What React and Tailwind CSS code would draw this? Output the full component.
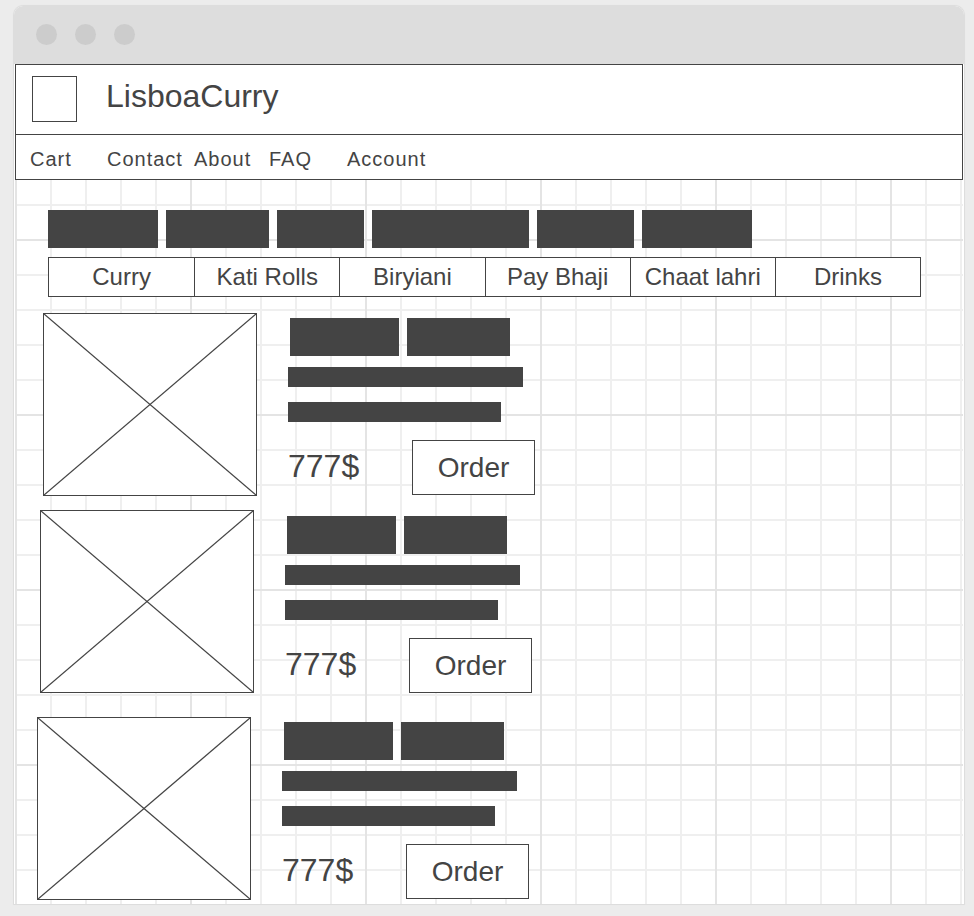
import React from 'react';

const topBars = ['w-[110px]', 'w-[103px]', 'w-[87px]', 'w-[157px]', 'w-[97px]', 'w-[110px]'];
const tabs = ['Curry', 'Kati Rolls', 'Biryiani', 'Pay Bhaji', 'Chaat lahri', 'Drinks'];

const navItems = [
    { label: 'Cart', w: 'w-[77px]' },
    { label: 'Contact', w: 'w-[87px]' },
    { label: 'About', w: 'w-[75px]' },
    { label: 'FAQ', w: 'w-[78px]' },
    { label: 'Account', w: '' },
];

// slight drift per card, like the hand-placed mockup
const cards = [
    { ml: 'ml-[28px]', mt: 'mt-[16px]', pt: 'pt-[5px]' },
    { ml: 'ml-[25px]', mt: 'mt-[14px]', pt: 'pt-[6px]' },
    { ml: 'ml-[22px]', mt: 'mt-[24px]', pt: 'pt-[5px]' },
];

const Placeholder = () => (
    <div className="w-[214px] h-[183px] border border-[#444] bg-white shrink-0">
        <svg className="block w-full h-full" viewBox="0 0 100 100" preserveAspectRatio="none">
            <line x1="0" y1="0" x2="100" y2="100" stroke="#444" strokeWidth="1.3" vectorEffect="non-scaling-stroke" />
            <line x1="100" y1="0" x2="0" y2="100" stroke="#444" strokeWidth="1.3" vectorEffect="non-scaling-stroke" />
        </svg>
    </div>
);

const MenuCard = ({ ml, mt, pt }) => (
    <div className={`flex items-start ${ml} ${mt}`}>
        <Placeholder />
        <div className={`flex flex-col ml-[31px] ${pt}`}>
            <div className="flex gap-[8px] pl-[2px]">
                <div className="w-[109px] h-[38px] bg-[#444]" />
                <div className="w-[103px] h-[38px] bg-[#444]" />
            </div>
            <div className="w-[235px] h-[20px] bg-[#444] mt-[11px]" />
            <div className="w-[213px] h-[20px] bg-[#444] mt-[15px]" />
            <div className="flex items-center mt-[18px]">
                <span className="w-[124px] mb-[3px] text-[32px] text-[#444]">777$</span>
                <button className="w-[123px] h-[55px] border border-[#444] bg-white text-[28px] text-[#444] flex items-center justify-center">
                    Order
                </button>
            </div>
        </div>
    </div>
);

export default function App() {
    return (
        <div className="w-[974px] h-[916px] bg-[#ececec] pt-[6px] pl-[14px] overflow-hidden font-['Liberation_Sans',Arial,sans-serif]">
            <div className="w-[950px] h-[898px] bg-white rounded-t-[9px] overflow-hidden shadow-[0_0_1px_1px_rgba(0,0,0,0.07)] flex flex-col">

                {/* Title bar */}
                <div className="h-[58px] bg-[#dddddd] flex items-start gap-[18px] pl-[22px] pt-[18px] shrink-0">
                    <div className="size-[21px] rounded-full bg-[#cccccc]" />
                    <div className="size-[21px] rounded-full bg-[#cccccc]" />
                    <div className="size-[21px] rounded-full bg-[#cccccc]" />
                </div>

                {/* Page body with grid */}
                <div className="flex-1 mx-[1px] [background-image:linear-gradient(to_right,#e4e4e4_2px,transparent_2px),linear-gradient(to_bottom,#e4e4e4_2px,transparent_2px),linear-gradient(to_right,#efefef_2px,transparent_2px),linear-gradient(to_bottom,#efefef_2px,transparent_2px)] [background-size:175px_175px,175px_175px,35px_35px,35px_35px]">

                    {/* Header */}
                    <div className="h-[71px] border border-[#444] bg-white flex items-start">
                        <div className="w-[45px] h-[46px] border border-[#444] ml-[16px] mt-[11px]" />
                        <h1 className="ml-[29px] mt-[15px] text-[32px] leading-none text-[#444]">LisboaCurry</h1>
                    </div>

                    {/* Nav */}
                    <div className="h-[45px] border-x border-b border-[#444] bg-white flex items-start pl-[14px] pt-[14px]">
                        {navItems.map(item => (
                            <span key={item.label} className={`${item.w} text-[20px] leading-none tracking-[1px] text-[#444]`}>
                                {item.label}
                            </span>
                        ))}
                    </div>

                    {/* Content */}
                    <div className="pt-[30px]">
                        <div className="flex gap-[8px] ml-[33px]">
                            {topBars.map((w, i) => (
                                <div key={i} className={`${w} h-[38px] bg-[#444]`} />
                            ))}
                        </div>

                        <div className="grid grid-cols-6 w-[873px] h-[40px] border border-[#444] bg-white ml-[33px] mt-[9px]">
                            {tabs.map((t, i) => (
                                <div key={t} className={`flex items-center justify-center text-[24px] text-[#444] ${i > 0 ? 'border-l border-[#444]' : ''}`}>
                                    {t}
                                </div>
                            ))}
                        </div>

                        {cards.map((c, i) => (
                            <MenuCard key={i} {...c} />
                        ))}
                    </div>
                </div>
            </div>
        </div>
    );
}
